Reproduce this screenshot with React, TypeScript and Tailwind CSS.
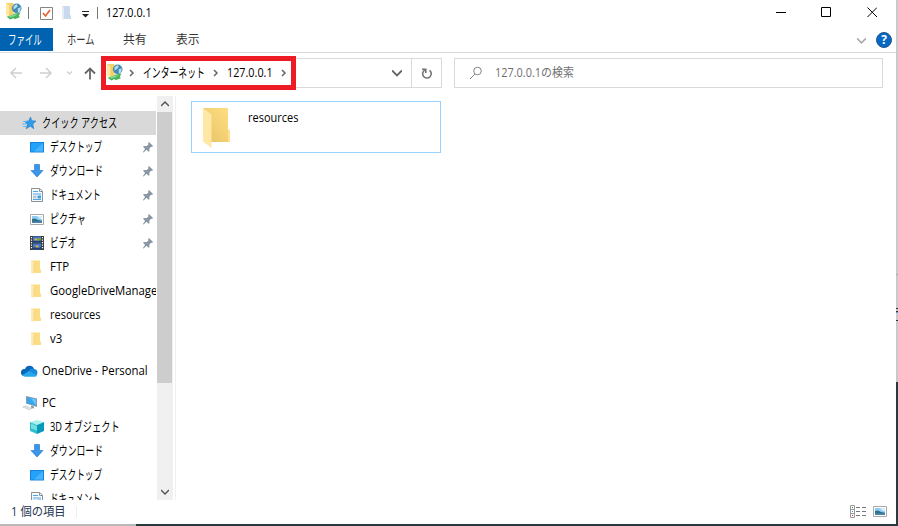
import type { ReactNode } from 'react';

function NetFolder() {
  return (
    <svg width="17" height="17" viewBox="0 0 16 16" className="shrink-0">
      <path d="M1 0h7v12l-4 0-3-1z" fill="#f3d068" />
      <path d="M1 0l3 2v11l-3-2z" fill="#ffe8a0" />
      <circle cx="11" cy="5" r="4.500" fill="#4389b4" />
      <path d="M8 3l3-2 1 2-2 2-2 1zM12 5l3-1-1 4-2 1z" fill="#b5dcea" />
      <path d="M8.500 10l6-1-1.500 3 1 1.500-5 1.800-1-1.300-3 1.500-3.500-2.500 6-2z" fill="#48b45c" />
      <path d="M3 12.500l5-1.500 4-.5-3 2-4 1z" fill="#8bd796" />
    </svg>
  );
}

function Folder() {
  return (
    <svg width="16" height="16" viewBox="0 0 16 16" className="shrink-0">
      <path d="M2 1.500h9V10l1 1v3H2z" fill="#fbdd86" />
      <path d="M2 1.500l3 2v11.500l-3-1.500z" fill="#ffebb4" />
      <path d="M5 4v10" stroke="#efcd77" strokeWidth=".7" />
    </svg>
  );
}

function BigFolder() {
  return (
    <svg width="30" height="42" viewBox="0 0 30 42" className="shrink-0">
      <defs>
        <linearGradient id="fold" x1="1" y1="0" x2="0" y2="1">
          <stop stopColor="#ffdf83" />
          <stop offset="1" stopColor="#e8c266" />
        </linearGradient>
      </defs>
      <path d="M0 1h25v21l2 2v11H8z" fill="url(#fold)" />
      <path d="M25 23l2 1.500V35h-2z" fill="#ffe08a" />
      <path d="M0 1l8.500 6.500V41L0 34.500z" fill="#ffe7a5" />
    </svg>
  );
}

function Star() {
  return (
    <svg width="16" height="16" viewBox="0 0 16 16" className="shrink-0">
      <path d="M8.500 2l1.300 3.800 4.200.3-3.200 2.900 1 4.700L8.300 11.200 4.200 13.800l1.200-4.400L2.500 6.400l4.300-.5z" fill="#2f9ceb" stroke="#2479c0" strokeWidth=".6" />
      <path d="M1 6.500h4M0 9h4M1 11.500h3" stroke="#65b7ee" strokeWidth="1" />
    </svg>
  );
}

function Desktop() {
  return (
    <svg width="16" height="16" viewBox="0 0 16 16" className="shrink-0">
      <path d="M1 3h14v10.500H1z" fill="#1683d9" />
      <path d="M2 4h12v8.500H2z" fill="#22a2fa" />
      <path d="M14 4v8.500H5z" fill="#47b3fc" />
    </svg>
  );
}

function Download() {
  return (
    <svg width="16" height="16" viewBox="0 0 16 16" className="shrink-0">
      <path d="M5.500 1.500h5V7.500H14L8 14 2 7.500h3.500z" fill="#3996e8" stroke="#2f7fcf" strokeWidth=".7" />
    </svg>
  );
}

function Document() {
  return (
    <svg width="16" height="16" viewBox="0 0 16 16" className="shrink-0">
      <path d="M2.500 1.500h8l3 2.500v10.500h-11z" fill="#f7fafc" stroke="#8a9299" />
      <path d="M10.500 1.500V4.500h3" fill="none" stroke="#8a9299" />
      <path d="M4 4.500h5M4 7h8M4 12.500h8" stroke="#4aa7e4" />
      <path d="M4 9.200h3.500M4 10.800h3.500" stroke="#7f9bad" strokeWidth=".8" />
      <path d="M8.500 8.500H12V11.500H8.500z" fill="#3f9ee0" />
    </svg>
  );
}

function Picture({ wide = false }: { wide?: boolean }) {
  return (
    <svg width={wide ? 14 : 16} height={wide ? 11 : 16} viewBox={wide ? '1 3 14 11' : '0 0 16 16'} className="shrink-0">
      <path d="M1.500 3.500h13v10h-13z" fill="#fff" stroke="#aaa" />
      <path d="M3 5h10v7H3z" fill="#8ecbf5" />
      <path d="M3 8l3-.5 3 1.500 4 .8V12H3z" fill="#2e7182" />
      <path d="M3 10.500h10V12H3z" fill="#4e86b5" />
      <path d="M8 5h5v3.500l-3-1z" fill="#d7edf7" />
    </svg>
  );
}

function Video() {
  return (
    <svg width="16" height="16" viewBox="0 0 16 16" className="shrink-0">
      <path d="M1 1h14v14H1z" fill="#3b3b3b" />
      <path d="M4 1.500h8v6H4zM4 8.500h8v6H4z" fill="#3f78d2" />
      <path d="M4 6l3-1 2 1 3-1v2.500H4zM4 13l3-1.500 3 1.500 2-1v2.500H4z" fill="#203f78" />
      <path d="M5.500 3.500h3v2h-3zM6.500 10.500h3v2h-3z" fill="#d9b443" />
      <path d="M8.500 3H12v2.500H8.500z" fill="#73a34b" />
      <path d="M2.500 2v12M13.500 2v12" stroke="#fff" strokeWidth="1.200" strokeDasharray="1.300 1.200" />
    </svg>
  );
}

function Cloud() {
  return (
    <svg width="17" height="16" viewBox="0 0 17 16" className="shrink-0">
      <path d="M4 6a4.800 4.800 0 0 1 9 0l-3 3-7 4a3.500 3.500 0 0 1 1-7z" fill="#0867b8" />
      <path d="M8 7.500A4 4 0 0 1 13 6a3.600 3.600 0 0 1 1 7H4z" fill="#168bdb" />
      <path d="M1.500 12l6.500-4 8 4.500a3 3 0 0 1-2.500 1.200H4a3 3 0 0 1-2.500-1.700z" fill="#27a7ec" />
    </svg>
  );
}

function Computer() {
  return (
    <svg width="16" height="16" viewBox="0 0 16 16" className="shrink-0">
      <path d="M4 1l11 2.500v8.500L4 8.500z" fill="#829aa9" />
      <path d="M5 2.300l9 2v6.300l-9-2.400z" fill="#35a7f0" />
      <path d="M9 3.200l5 1.100v6.300z" fill="#67c4fa" />
      <path d="M9 10.500l3 1v2l-3-1z" fill="#899aa5" />
      <path d="M0 12l4-1.500 7 3-4 1.500z" fill="#bdc5ca" />
      <path d="M2 12l6 2M4 11.300l5 2" stroke="#fff" strokeWidth=".6" />
    </svg>
  );
}

function Cube() {
  return (
    <svg width="16" height="16" viewBox="0 0 16 16" className="shrink-0">
      <path d="M1 3l7-2 7 2-7 3z" fill="#aaf1f1" />
      <path d="M1 3l7 3v9l-7-3z" fill="#31bdcb" />
      <path d="M8 6l7-3v9l-7 3z" fill="#079abb" />
      <path d="M2 4.500l6 2.500v4.500L2 9.500z" fill="#71dfe0" />
    </svg>
  );
}

function Pin() {
  return (
    <svg width="12" height="12" viewBox="0 0 11 12" className="shrink-0">
      <path d="M6.500 1l4 4-1 1-1-.3-1.700 2 .2 2.300-1 .8-2-2L1 11.500l-.6-.6L2.600 8 .5 5.800l1-.8 2.300.2L6 3.500 5.700 2z" fill="#8796a1" />
    </svg>
  );
}

function Chevron({ d, w = 8, color = '#666' }: { d: string; w?: number; color?: string }) {
  return (
    <svg width={w} height={w} viewBox="0 0 8 8" className="shrink-0">
      <path d={d} fill="none" stroke={color} strokeWidth="1.500" />
    </svg>
  );
}

type Entry = { icon: ReactNode; label: string; squeeze: string; pin?: boolean };

const quick: Entry[] = [
  { icon: <Desktop />, label: 'デスクトップ', squeeze: 'text-[13px] -translate-y-px scale-x-[0.67]', pin: true },
  { icon: <Download />, label: 'ダウンロード', squeeze: 'text-[13px] -translate-y-px scale-x-[0.68]', pin: true },
  { icon: <Document />, label: 'ドキュメント', squeeze: 'text-[13px] -translate-y-px scale-x-[0.65]', pin: true },
  { icon: <Picture />, label: 'ピクチャ', squeeze: 'text-[13px] -translate-y-px scale-x-[0.69]', pin: true },
  { icon: <Video />, label: 'ビデオ', squeeze: 'text-[13px] -translate-y-px scale-x-[0.67]', pin: true },
  { icon: <Folder />, label: 'FTP', squeeze: 'scale-x-[0.95]' },
  { icon: <Folder />, label: 'GoogleDriveManager', squeeze: 'scale-x-[0.945]' },
  { icon: <Folder />, label: 'resources', squeeze: 'scale-x-[0.915]' },
  { icon: <Folder />, label: 'v3', squeeze: 'scale-x-[0.95]' },
];

const pc: Entry[] = [
  { icon: <Cube />, label: '3D オブジェクト', squeeze: 'text-[13px] -translate-y-px scale-x-[0.71]' },
  { icon: <Download />, label: 'ダウンロード', squeeze: 'text-[13px] -translate-y-px scale-x-[0.68]' },
  { icon: <Desktop />, label: 'デスクトップ', squeeze: 'text-[13px] -translate-y-px scale-x-[0.67]' },
  { icon: <Document />, label: 'ドキュメント', squeeze: 'text-[13px] -translate-y-px scale-x-[0.65]' },
];

function Label({ children, squeeze }: { children: ReactNode; squeeze: string }) {
  return <span className={`block origin-left whitespace-nowrap ${squeeze}`}>{children}</span>;
}

function Row({ icon, label, squeeze, pin }: Entry) {
  return (
    <div className="flex h-6 shrink-0 items-center overflow-hidden pl-[29px]">
      {icon}
      <div className="ml-[5px] w-[90px] shrink-0"><Label squeeze={squeeze}>{label}</Label></div>
      {pin && <span className="ml-0.5"><Pin /></span>}
    </div>
  );
}

export default function App() {
  return (
    <div className="flex h-[526px] w-[898px] flex-col overflow-hidden bg-white font-['Open_Sans','Noto_Sans_CJK_JP',sans-serif] text-[12px] leading-[18px] text-black">
      <div className="flex h-[524px]">
        <div className="relative flex w-[896px] flex-col bg-white">
          <header className="flex h-7 shrink-0 items-start">
            <div className="flex h-[26px] items-center pl-[5px]">
              <span className="mb-1"><NetFolder /></span>
              <span className="ml-[6px] h-3 w-px bg-[#777]" />
              <svg width="13" height="15" viewBox="0 0 13 15" className="ml-[11px]">
                <path d="M.5 1.500h12v12H.5z" fill="#fff" stroke="#858585" />
                <path d="M3 7l2.500 3L10 4" fill="none" stroke="#e3642e" strokeWidth="1.700" />
              </svg>
              <svg width="11" height="14" viewBox="0 0 11 14" className="ml-[8px]">
                <path d="M1 0h8v9l1 1v3H1z" fill="#c9daee" />
                <path d="M1 0l2 1.500V14l-2-1z" fill="#e3edf8" />
              </svg>
              <svg width="7" height="7" viewBox="0 0 7 7" className="ml-[10px] mt-0.5">
                <path d="M0 .5h7" stroke="#222" /><path d="M0 3h7L3.500 6.500z" fill="#222" />
              </svg>
              <span className="ml-2 h-3 w-px bg-[#777]" />
              <span className="ml-[8px] w-[60px]"><Label squeeze="scale-x-[0.9]">127.0.0.1</Label></span>
            </div>
            <svg width="101" height="12" viewBox="0 0 101 12" className="ml-auto mr-[19px] mt-[6px]" fill="none" stroke="#000">
              <path d="M0 6.500h10M45.500 1.500h9v9h-9zM91.500 1.500l9.500 9.500M101 1.500L91.500 11" />
            </svg>
          </header>

          <nav className="flex h-[25px] shrink-0 border-b border-[#dadbdc]">
            <div className="h-[23px] w-[53px] bg-[#0063b1] pl-[8px] pt-[3px] text-white"><Label squeeze="text-[13px] -translate-y-px scale-x-[0.65]">ファイル</Label></div>
            <div className="w-[56px] pl-[14px] pt-[3px] text-[#333]"><Label squeeze="text-[13px] -translate-y-px scale-x-[0.71]">ホーム</Label></div>
            <div className="w-[53px] pl-[14px] pt-[3px] text-[#333]"><Label squeeze="scale-x-[0.98]">共有</Label></div>
            <div className="w-[53px] pl-[14px] pt-[3px] text-[#333]"><Label squeeze="scale-x-[0.98]">表示</Label></div>
            <div className="ml-auto flex items-center pr-1">
              <Chevron d="M0 2l4 4 4-4" w={9} color="#aaa" />
              <svg width="16" height="16" viewBox="0 0 16 16" className="ml-[10px]">
                <circle cx="8" cy="8" r="7.500" fill="#0868c4" stroke="#24568a" />
                <text x="8" y="12.400" textAnchor="middle" fill="#fff" fontSize="12" fontWeight="700">?</text>
              </svg>
            </div>
          </nav>

          <div className="flex h-[43px] shrink-0 pt-[5px]">
            <div className="flex h-[30px] w-[101px] shrink-0 items-center pl-[10px]">
              <svg width="87" height="14" viewBox="0 0 87 14" fill="none">
                <path d="M12 7H1M6 2L1 7l5 5M30 7h11M36 2l5 5-5 5" stroke="#cfcfcf" strokeWidth="1.500" />
                <path d="M57 5.500l2.500 2.500L62 5.500" stroke="#ccc" strokeWidth="1.200" />
                <path d="M80 13.500V2.500M75 7.500l5-5 5 5" stroke="#666" strokeWidth="1.800" />
              </svg>
            </div>
            <div className="flex h-[30px] w-[341px] items-center border border-[#d9d9d9] pl-1">
              <span className="mb-0.5"><NetFolder /></span>
              <span className="ml-[5px]"><Chevron d="M2 1l3 3-3 3" /></span>
              <span className="ml-[7px] w-[69px]"><Label squeeze="text-[13px] -translate-y-px scale-x-[0.68]">インターネット</Label></span>
              <Chevron d="M2 1l3 3-3 3" />
              <span className="ml-[7px] w-[53px]"><Label squeeze="scale-x-[0.9]">127.0.0.1</Label></span>
              <Chevron d="M2 1l3 3-3 3" />
              <span className="ml-auto mr-[9px]"><Chevron d="M0 2l4 4 4-4" w={10} /></span>
              <div className="flex h-full w-[30px] items-center justify-center border-l border-[#d9d9d9]">
                <svg width="12" height="13" viewBox="0 0 12 13" fill="none" stroke="#747474" strokeWidth="1.600">
                  <path d="M8.500 3.300a4.300 4.300 0 1 1-4.800-.2" /><path d="M1 2.200H4.800V6" />
                </svg>
              </div>
            </div>
            <div className="ml-3 flex h-[30px] w-[429px] items-center border border-[#d9d9d9] pl-[14px] text-[#707070]">
              <svg width="14" height="14" viewBox="0 0 14 14" fill="none" stroke="#858585"><circle cx="8.500" cy="5" r="3.800" /><path d="M6 8l-5 5" /></svg>
              <span className="ml-3"><Label squeeze="scale-x-[0.91]">127.0.0.1の検索</Label></span>
            </div>
          </div>

          <div className="flex h-[404px] shrink-0">
            <aside className="flex w-[156px] shrink-0 flex-col overflow-hidden pt-[15px]">
              <div className="flex h-6 shrink-0 items-center bg-[#d9d9d9] pl-[22px]">
                <Star /><span className="ml-1"><Label squeeze="text-[13px] -translate-y-px scale-x-[0.705]">クイック アクセス</Label></span>
              </div>
              {quick.map((e) => <Row key={e.label} {...e} />)}
              <div className="mt-2 flex h-6 shrink-0 items-center pl-[21px]">
                <Cloud /><span className="ml-1"><Label squeeze="scale-x-[0.945]">OneDrive - Personal</Label></span>
              </div>
              <div className="mt-2 flex h-6 shrink-0 items-center pl-[22px]">
                <Computer /><span className="ml-1"><Label squeeze="scale-x-[0.95]">PC</Label></span>
              </div>
              {pc.map((e) => <Row key={e.label} {...e} />)}
            </aside>
            <div className="ml-px flex w-4 shrink-0 flex-col items-center bg-[#f0f0f0]">
              <span className="flex h-4 items-center"><Chevron d="M0 6l4-4 4 4" w={8} color="#555" /></span>
              <span className="h-[271px] w-[15px] self-start bg-[#cdcdcd]" />
              <span className="mt-auto flex h-4 items-center"><Chevron d="M0 2l4 4 4-4" w={8} color="#555" /></span>
            </div>
            <main className="ml-[2px] flex-1 border-l border-[#f0f0f0] pl-[15px] pt-[5px]">
              <div className="flex h-[52px] w-[250px] border border-[#99d1ff] pl-[11px] pt-[5px]">
                <BigFolder /><span className="ml-[15px] mt-[2px]"><Label squeeze="scale-x-[0.915]">resources</Label></span>
              </div>
            </main>
          </div>

          <footer className="flex h-6 shrink-0 items-center pl-[11px] text-[#24364f]">
            <span className="w-[65px]"><Label squeeze="scale-x-[0.94]">1 個の項目</Label></span>
            <span className="h-3 w-px bg-[#eee]" />
            <svg width="17" height="13" viewBox="0 0 17 13" className="ml-auto mb-0.5" fill="none">
              <path d="M.5.5h4v12h-4zM.5 4.500h4M.5 8.500h4" stroke="#999" />
              <path d="M6 2.500h4m2 0h4M6 6.500h4m2 0h4M6 10.500h4m2 0h4" stroke="#777" />
              <path d="M2 2.500h1" stroke="#198b58" /><path d="M2 6.500h1" stroke="#248bed" /><path d="M2 10.500h1" stroke="#e22" />
            </svg>
            <span className="mb-0.5 ml-[6px] mr-[9px]"><Picture wide /></span>
          </footer>

          <div className="pointer-events-none absolute left-[101px] top-[56px] h-[34px] w-[195px] border-[5px] border-[#ed1c24]" />
        </div>
        <div className="flex w-[2px] flex-col bg-[#c9c9c9]">
          <span className="mt-[274px] h-px bg-[#aaa]" />
          <span className="mt-[33px] h-px bg-[#333]" />
          <span className="mt-[2px] h-px bg-[#333]" />
          <span className="h-px bg-[#58a5dc]" />
          <span className="mt-[7px] h-px bg-[#333]" />
          <span className="mt-[61px] flex-1 bg-[#2b393d]" />
        </div>
      </div>
      <div className="flex h-[2px]"><span className="w-[136px] bg-[#b9b9b9]" /><span className="flex-1 bg-[#2b393d]" /></div>
    </div>
  );
}
